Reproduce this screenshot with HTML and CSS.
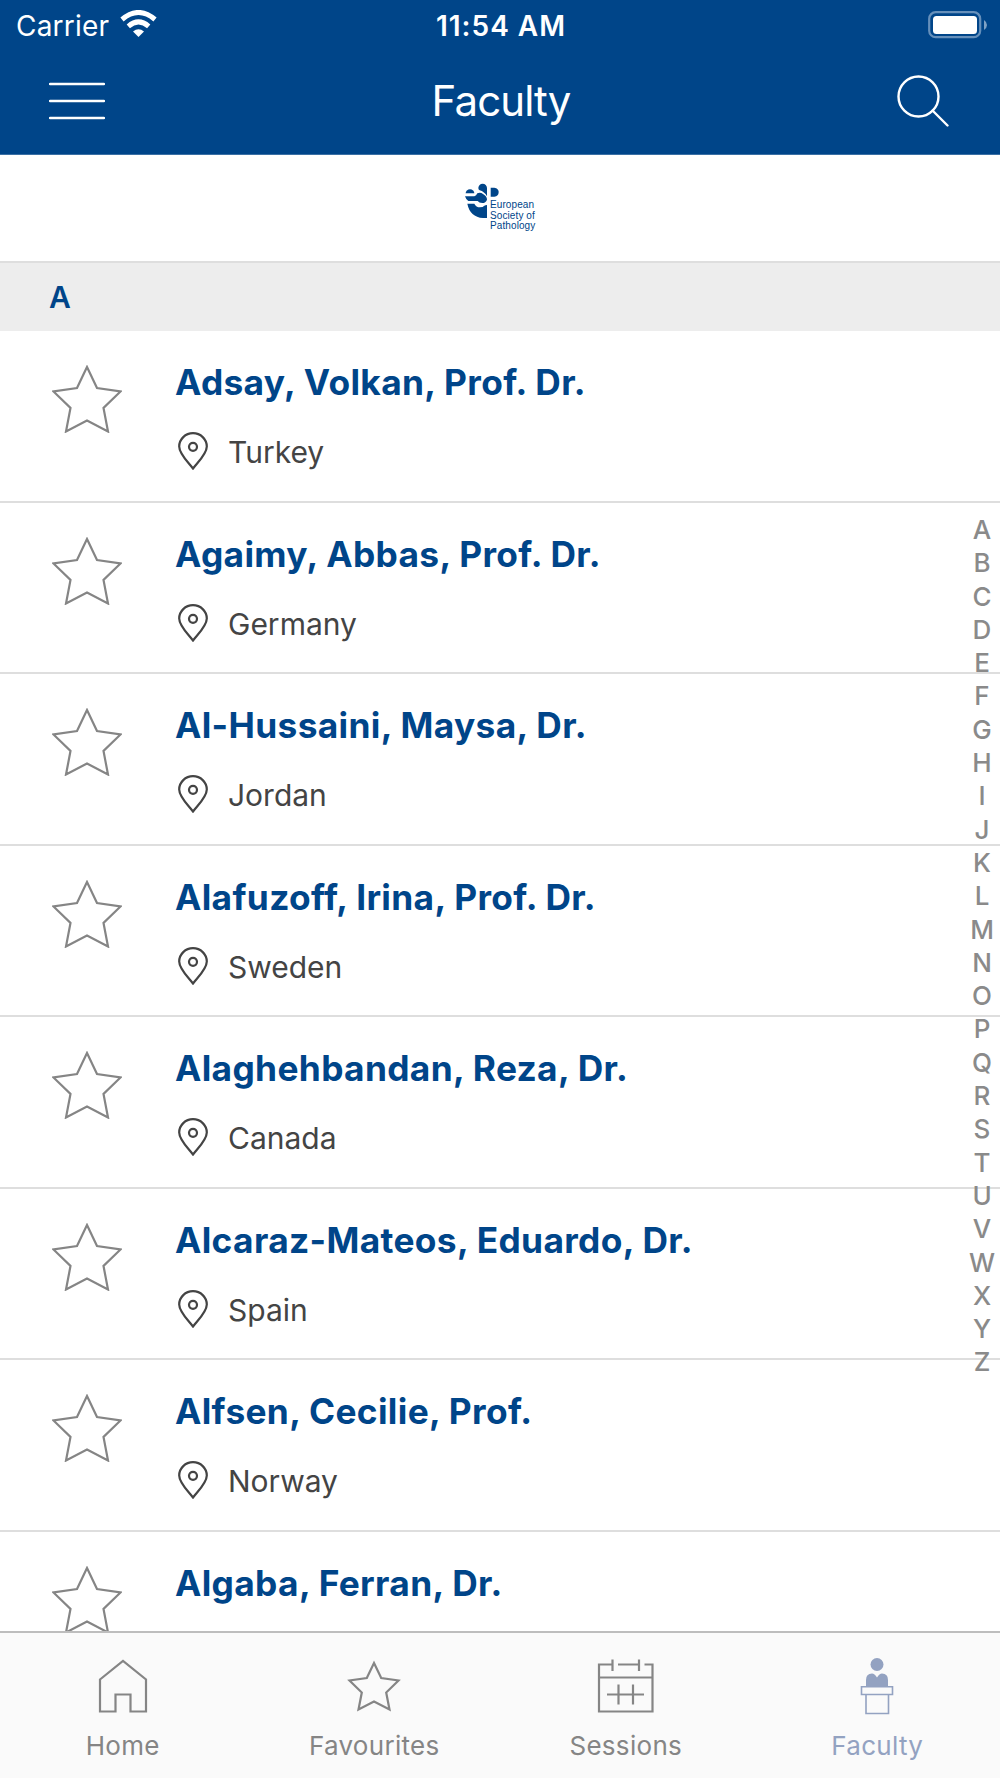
FILE: index.html
```
<!DOCTYPE html>
<html lang="en">
<head>
    <meta charset="UTF-8">
    <meta name="viewport" content="width=device-width, initial-scale=1.0">
    <title>Faculty</title>
    <link rel="stylesheet" href="styles.css">
</head>
<body>
    <!-- Shared icons -->
    <svg class="sprite">
      <symbol id="star" viewBox="0 0 70 68">
        <path d="M35 2 L45 23 L68.500 26.500 L51.500 43 L56 66.500 L35 55.500 L14 66.500 L18.500 43 L1.500 26.500 L25 23 Z" />
      </symbol>
      <symbol id="pin" viewBox="0 0 30 38">
        <path d="M15 36.500 C10 30 1.200 22 1.200 14.500 A13.800 13.300 0 0 1 28.800 14.500 C28.800 22 20 30 15 36.500 Z" />
        <circle cx="15" cy="14.800" r="4" />
      </symbol>
    </svg>

    <div class="app">
      <header class="header">
        <div class="status-bar">
          <div class="carrier">
            <span>Carrier</span>
            <svg width="37" height="28" viewBox="0 0 37 28">
              <path d="M2 9.500 Q18.500 -4.500 35 9.500" fill="none" stroke="#fff" stroke-width="5" />
              <path d="M8.300 16.300 Q18.500 7.500 28.700 16.300" fill="none" stroke="#fff" stroke-width="5" />
              <path d="M13 21.500 Q18.500 16.800 24 21.500 L18.500 27 Z" fill="#fff" />
            </svg>
          </div>
          <div class="time">11:54 AM</div>
          <svg class="battery" width="60" height="28" viewBox="0 0 60 28">
            <rect x="1.200" y="1.200" width="51" height="25" rx="6.500" fill="none" stroke="#6690bb" stroke-width="2.200" />
            <rect x="5" y="5" width="44" height="18" rx="3.500" fill="#fff" />
            <path d="M56 9 Q59 11 59 14 Q59 17 56 19 Z" fill="#7fa2c5" />
          </svg>
        </div>
        <div class="nav-bar">
          <svg width="56" height="38" viewBox="0 0 56 38" stroke="#fff" stroke-width="2.500" stroke-linecap="round">
            <path d="M1 2 H55 M1 19 H55 M1 36 H55" />
          </svg>
          <h1>Faculty</h1>
          <svg width="52" height="52" viewBox="0 0 52 52" fill="none" stroke="#fff" stroke-width="2.400" stroke-linecap="round">
            <circle cx="21.500" cy="21.500" r="20" />
            <path d="M35.500 35.500 L50.500 50.500" />
          </svg>
        </div>
      </header>

      <div class="logo">
        <svg width="34" height="35" viewBox="0 0 102 105" fill="#004589">
          <path d="M2 31 A13 12 0 0 1 28 31 Z" />
          <path d="M40 15 A13 13 0 0 1 66 15 V40 Q58 26 44 22 Q40 20 40 15 Z" />
          <path d="M0 40 H28 Q34 38 37 31 Q46 26 54 33 Q66 40 66 50 Q62 60 52 60 Q42 60 38 54 H10 Q3 50 0 40 Z" />
          <path d="M7 62 H28 Q33 73 45 73 Q54 73 58 68 Q61 66 66 66 V105 H54 Q15 102 7 62 Z" />
          <path d="M77 14 H88 Q101 16 101 27 Q101 40 88 41 H77 Z" />
        </svg>
        <div class="logo-text">European<br>Society of<br>Pathology</div>
      </div>

      <div class="section">A</div>

      <div class="list">
        <div class="row">
          <svg class="star"><use href="#star" /></svg>
          <div class="info">
            <div class="name">Adsay, Volkan, Prof. Dr.</div>
            <div class="country"><svg class="pin"><use href="#pin" /></svg>Turkey</div>
          </div>
        </div>
        <div class="row">
          <svg class="star"><use href="#star" /></svg>
          <div class="info">
            <div class="name">Agaimy, Abbas, Prof. Dr.</div>
            <div class="country"><svg class="pin"><use href="#pin" /></svg>Germany</div>
          </div>
        </div>
        <div class="row">
          <svg class="star"><use href="#star" /></svg>
          <div class="info">
            <div class="name">Al-Hussaini, Maysa, Dr.</div>
            <div class="country"><svg class="pin"><use href="#pin" /></svg>Jordan</div>
          </div>
        </div>
        <div class="row">
          <svg class="star"><use href="#star" /></svg>
          <div class="info">
            <div class="name">Alafuzoff, Irina, Prof. Dr.</div>
            <div class="country"><svg class="pin"><use href="#pin" /></svg>Sweden</div>
          </div>
        </div>
        <div class="row">
          <svg class="star"><use href="#star" /></svg>
          <div class="info">
            <div class="name">Alaghehbandan, Reza, Dr.</div>
            <div class="country"><svg class="pin"><use href="#pin" /></svg>Canada</div>
          </div>
        </div>
        <div class="row">
          <svg class="star"><use href="#star" /></svg>
          <div class="info">
            <div class="name">Alcaraz-Mateos, Eduardo, Dr.</div>
            <div class="country"><svg class="pin"><use href="#pin" /></svg>Spain</div>
          </div>
        </div>
        <div class="row">
          <svg class="star"><use href="#star" /></svg>
          <div class="info">
            <div class="name">Alfsen, Cecilie, Prof.</div>
            <div class="country"><svg class="pin"><use href="#pin" /></svg>Norway</div>
          </div>
        </div>
        <div class="row">
          <svg class="star"><use href="#star" /></svg>
          <div class="info">
            <div class="name">Algaba, Ferran, Dr.</div>
          </div>
        </div>
      </div>

      <!-- A-Z index over the list -->
      <div class="index">
        <span>A</span><span>B</span><span>C</span><span>D</span><span>E</span><span>F</span><span>G</span>
        <span>H</span><span>I</span><span>J</span><span>K</span><span>L</span><span>M</span><span>N</span>
        <span>O</span><span>P</span><span>Q</span><span>R</span><span>S</span><span>T</span><span>U</span>
        <span>V</span><span>W</span><span>X</span><span>Y</span><span>Z</span>
      </div>

      <nav class="tabs">
        <div class="tab">
          <svg width="60" height="60" viewBox="0 0 60 60">
            <path d="M7 24.500 L30 6 L53 24.500 V56.500 H37.500 V39.500 H22.500 V56.500 H7 Z" />
          </svg>
          <span>Home</span>
        </div>
        <div class="tab">
          <svg width="60" height="60" viewBox="0 0 60 60">
            <path d="M30 8 L37.200 23 L54.500 25.500 L42.200 37.500 L45.500 54.500 L30 46.500 L14.500 54.500 L17.800 37.500 L5.500 25.500 L22.800 23 Z" />
          </svg>
          <span>Favourites</span>
        </div>
        <div class="tab">
          <svg width="60" height="60" viewBox="0 0 60 60">
            <path d="M16.500 9.500 H3 V56.500 H56.500 V9.500 H48.500 M22 9.500 H42.500 M16.500 4.500 V16 M43 4.500 V16 M3 22.500 H56.500 M11 39.500 H48 M22.500 29.500 V49.500 M37 29.500 V49.500" />
          </svg>
          <span>Sessions</span>
        </div>
        <div class="tab active">
          <svg width="60" height="60" viewBox="0 0 60 60">
            <circle class="solid" cx="30" cy="9.500" r="6.500" />
            <path class="solid" d="M19 32 V25 Q19 18.500 25 18.500 Q27.500 18.500 30 22.500 Q32.500 18.500 35 18.500 Q41 18.500 41 25 V32 Z" />
            <path class="thin" d="M14.500 31.800 H45.500 V39.500 H14.500 Z M19 39.500 V58.500 H41.500 V39.500" />
          </svg>
          <span>Faculty</span>
        </div>
      </nav>
    </div>
</body>
</html>
```
FILE: styles.css
```
* {
  box-sizing: border-box;
}
body {
  margin: 0;
  background: white;
  font-family: Inter, "Liberation Sans", sans-serif;
}
.sprite {
  display: none;
}
.app {
  position: relative;
  width: 1000px;
  height: 1778px;
  display: flex;
  flex-direction: column;
  overflow: hidden;
}
.header {
  height: 155px;
  flex-shrink: 0;
  background: #004589;
  color: white;
  border-bottom: 1px solid #3b70a5;
}
.status-bar {
  height: 51px;
  padding: 0 12px 0 16px;
  display: grid;
  grid-template-columns: 1fr auto 1fr;
  align-items: center;
}
.carrier {
  display: flex;
  align-items: center;
  gap: 11px;
  font-size: 28px;
  letter-spacing: 0.2px;
}
.carrier svg {
  margin-top: -3px;
}
.time {
  margin-right: 2px;
  font-size: 28px;
  font-weight: 600;
  letter-spacing: 1px;
}
.battery {
  justify-self: end;
  margin-top: -2px;
}
.nav-bar {
  height: 100px;
  padding: 0 51px 0 49px;
  display: flex;
  align-items: center;
  justify-content: space-between;
}
.nav-bar h1 {
  margin: -2px 0 0;
  font-size: 42px;
  font-weight: 400;
  letter-spacing: -0.9px;
}
.logo {
  height: 108px;
  flex-shrink: 0;
  padding: 28px 0 0 465px;
  display: flex;
  border-bottom: 2px solid #dedede;
}
.logo-text {
  margin: 17px 0 0 -9px;
  color: #004589;
  font: 10px/10.7px "Liberation Sans", sans-serif;
  letter-spacing: 0.1px;
}
.section {
  height: 68px;
  flex-shrink: 0;
  padding-left: 49px;
  background: #ededed;
  color: #004589;
  font-size: 30px;
  font-weight: 600;
  line-height: 68px;
}
.list {
  flex: 1;
  overflow: hidden;
}
.row {
  height: 171.5px;
  padding: 34px 0 0 52px;
  display: flex;
  border-bottom: 2px solid #dedede;
}
.star {
  width: 70px;
  height: 68px;
  fill: none;
  stroke: #858585;
  stroke-width: 2.2;
}
.info {
  margin-left: 53px;
}
.name {
  height: 34px;
  color: #004589;
  font-size: 35.3px;
  font-weight: 700;
  line-height: 35px;
  letter-spacing: 0.35px;
}
.country {
  height: 38px;
  margin: 34px 0 0 3px;
  display: flex;
  align-items: center;
  color: #444;
  font-size: 30px;
}
.pin {
  width: 30px;
  height: 38px;
  margin: -2px 20px 0 0;
  fill: none;
  stroke: #444;
  stroke-width: 2.2;
}
.index {
  position: absolute;
  top: 513px;
  right: 3px;
  width: 30px;
  display: flex;
  flex-direction: column;
  align-items: center;
  color: #8a8a8a;
  font-size: 26px;
  font-weight: 500;
  line-height: 33.3px;
}
.tabs {
  height: 147px;
  flex-shrink: 0;
  margin: 0 -3px;
  display: grid;
  grid-template-columns: repeat(4, 1fr);
  background: #fafafa;
  border-top: 2px solid #bdbdbd;
}
.tab {
  padding-top: 22px;
  display: flex;
  flex-direction: column;
  align-items: center;
  color: #858585;
  font-size: 26px;
  letter-spacing: 0.3px;
}
.tab svg {
  fill: none;
  stroke: currentColor;
  stroke-width: 2.2;
}
.tab span {
  margin-top: 15px;
  line-height: 32px;
}
.active {
  color: #93a2c1;
}
.tab .thin {
  stroke-width: 1.6;
}
.tab .solid {
  fill: currentColor;
  stroke: none;
}
```
